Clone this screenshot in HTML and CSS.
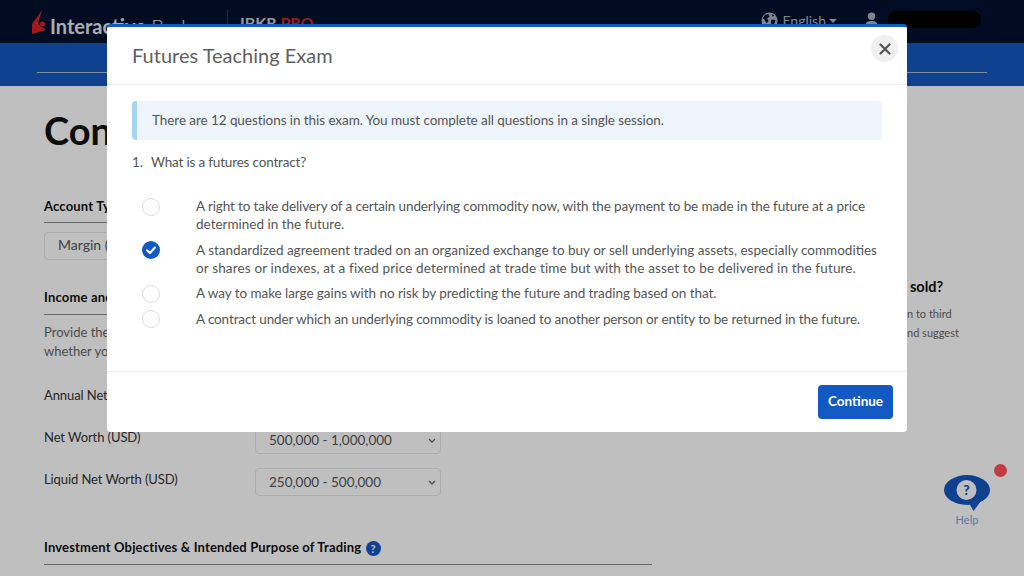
FILE: index.html
```html
<!DOCTYPE html>
<html lang="en">
<head>
<meta charset="utf-8">
<title>Futures Teaching Exam</title>
<link rel="stylesheet" href="styles.css">
</head>
<body>
<div class="page">
  <header class="topbar">
    <div class="brand">
      <svg class="logo" viewBox="0 0 14 25" width="14" height="25"><path d="M10.500 0 C8 5 3 10 0 15 V25 L14 21 L6 15 C7 10 9 5 10.500 0Z" fill="#d8232a"/><circle cx="10.500" cy="15" r="2.500" fill="#d8232a"/></svg>
      <span class="brand-name"><b>Interactive</b> Brokers</span>
    </div>
    <div class="product">IBKR <span class="pro">PRO</span></div>
    <div class="top-right">
      <svg class="globe" viewBox="0 0 18 18" width="17" height="17"><circle cx="9" cy="9" r="8.500" fill="#aab3bf"/><path d="M4 3 L8 2.500 L9 5 L6.500 7 L8 9.500 L6 12 L3.500 8 L2 7Z M11 8 L15.500 8.500 L14 13 L11.500 15 L10.500 11Z M11 2 L14 3.500 L12.500 5Z" fill="#01112d"/></svg>
      <span class="lang">English</span><span class="caret"></span>
      <svg class="user" viewBox="0 0 14 16" width="13" height="15"><circle cx="7" cy="4.500" r="4" fill="#aab3bf"/><path d="M1 15 V12.500 C1 10.500 4 9.500 7 9.500 C10 9.500 13 10.500 13 12.500 V15Z" fill="#aab3bf"/></svg>
      <span class="redacted"></span>
    </div>
  </header>
  <nav class="subnav"><div class="subnav-line"></div></nav>
  <main class="content">
    <div class="form-col">
      <h1 class="page-title">Con</h1>
      <h2 class="section-title first">Account Type</h2>
      <div class="field-box account-box">Margin (Reg T)</div>
      <h2 class="section-title income">Income and Net Worth</h2>
      <p class="intro">Provide the<br>whether you</p>
      <div class="row annual"><span class="row-label">Annual Net Income (USD)</span></div>
      <div class="row"><span class="row-label">Net Worth (USD)</span>
        <div class="field-box select-box">500,000 - 1,000,000<svg class="chev" viewBox="0 0 8 5" width="8" height="5"><path d="M1 1 L4 4 L7 1" fill="none" stroke="#666" stroke-width="1.300"/></svg></div>
      </div>
      <div class="row"><span class="row-label">Liquid Net Worth (USD)</span>
        <div class="field-box select-box">250,000 - 500,000<svg class="chev" viewBox="0 0 8 5" width="8" height="5"><path d="M1 1 L4 4 L7 1" fill="none" stroke="#666" stroke-width="1.300"/></svg></div>
      </div>
      <h2 class="section-title invest">Investment Objectives &amp; Intended Purpose of Trading <span class="qmark">?</span></h2>
    </div>
    <aside class="side-col">
      <h3 class="side-title">sold?</h3>
      <p class="side-a">n to third</p>
      <p class="side-b">nd suggest</p>
    </aside>
  </main>
  <div class="help">
    <span class="help-dot"></span>
    <svg class="help-bubble" viewBox="0 0 46 36" width="46" height="36"><ellipse cx="23" cy="15" rx="23" ry="15" fill="#1458be"/><path d="M25 28 L29.500 36 L37 26Z" fill="#1458be"/><circle cx="22.500" cy="15" r="10" fill="#fff"/></svg>
    <span class="help-q">?</span>
    <span class="help-label">Help</span>
  </div>
</div>
<div class="backdrop"></div>
<section class="modal">
  <div class="modal-head">
    <h2 class="modal-title">Futures Teaching Exam</h2>
    <button class="close" type="button"><svg viewBox="0 0 12 12" width="12" height="12"><path d="M1.500 1.500 L10.500 10.500 M10.500 1.500 L1.500 10.500" stroke="#555" stroke-width="2.200" stroke-linecap="round"/></svg></button>
  </div>
  <div class="modal-body">
    <div class="alert">There are 12 questions in this exam. You must complete all questions in a single session.</div>
    <div class="question"><span class="q-num">1.</span><span class="q-text">What is a futures contract?</span></div>
    <div class="options">
      <div class="option"><span class="radio-cell"><span class="radio"></span></span><span class="opt-text"><span class="line tight">A right to take delivery of a certain underlying commodity now, with the payment to be made in the future at a price</span><span class="line">determined in the future.</span></span></div>
      <div class="option"><span class="radio-cell raised"><svg class="radio-on" viewBox="0 0 18 18" width="18" height="18"><circle cx="9" cy="9" r="9" fill="#1259c3"/><path d="M5 9.300 L7.900 12 L13 6.500" fill="none" stroke="#fff" stroke-width="2" stroke-linecap="round" stroke-linejoin="round"/></svg></span><span class="opt-text"><span class="line">A standardized agreement traded on an organized exchange to buy or sell underlying assets, especially commodities</span><span class="line loose">or shares or indexes, at a fixed price determined at trade time but with the asset to be delivered in the future.</span></span></div>
      <div class="option"><span class="radio-cell"><span class="radio"></span></span><span class="opt-text"><span class="line slight">A way to make large gains with no risk by predicting the future and trading based on that.</span></span></div>
      <div class="option"><span class="radio-cell raised"><span class="radio"></span></span><span class="opt-text"><span class="line tight">A contract under which an underlying commodity is loaned to another person or entity to be returned in the future.</span></span></div>
    </div>
  </div>
  <div class="modal-foot"><button class="continue" type="button">Continue</button></div>
</section>
</body>
</html>
```
FILE: styles.css
```css
* { box-sizing: border-box; }
html, body { margin: 0; height: 576px; overflow: hidden; }
body { font-family: "Lato", "Liberation Sans", sans-serif; font-size: 14px; color: #555; background: #fff; }
.page { width: 1024px; height: 576px; overflow: hidden; position: relative; }
.topbar { height: 43px; background: #01112d; display: flex; align-items: flex-start; color: #fff; }
.brand { display: flex; align-items: flex-start; margin-left: 32px; padding-top: 9px; width: 195px; }
.logo { display: block; }
.brand-name { margin-left: 4px; font-size: 20px; line-height: 34px; white-space: nowrap; color: #e4e6ea; font-weight: 300; }
.brand-name b { font-weight: 700; }
.product { margin-top: 10px; border-left: 1px solid #2a3650; padding-left: 12px; height: 26px; font-size: 16px; line-height: 26px; font-weight: 700; color: #c4c9d2; white-space: nowrap; }
.pro { color: #d8232a; }
.top-right { margin-left: auto; display: flex; align-items: flex-start; padding-top: 11px; padding-right: 43px; color: #aab3bf; }
.globe { display: block; margin-top: 1px; }
.lang { margin-left: 4px; font-size: 14px; line-height: 20px; }
.caret { width: 0; height: 0; margin: 8px 0 0 3px; border: 4px solid transparent; border-top-color: #aab3bf; border-bottom: 0; }
.user { display: block; margin: 1px 0 0 28px; }
.redacted { width: 93px; height: 17px; margin-left: 10px; background: #000; border-radius: 9px; }
.subnav { height: 43px; background: #1458be; padding: 29px 37px 0; }
.subnav-line { height: 1px; background: #a9bfe0; }
.content { display: flex; background: #fff; height: 490px; padding-left: 44px; }
.form-col { width: 608px; flex: none; }
.page-title { margin: 21px 0 0; font-size: 38px; line-height: 46px; font-weight: 700; color: #111; }
.section-title { margin: 0; font-size: 13px; letter-spacing: .17px; line-height: 17px; font-weight: 700; color: #111; border-bottom: 1px solid #888; white-space: nowrap; }
.section-title.first { margin-top: 45px; padding-bottom: 7px; }
.section-title.income { margin-top: 29px; padding-bottom: 8px; }
.section-title.invest { margin-top: 43px; padding-bottom: 8px; }
.field-box { border: 1px solid #e6e6e6; border-radius: 4px; color: #555; font-size: 13.500px; white-space: nowrap; }
.account-box { margin-top: 9px; width: 180px; height: 28px; line-height: 24px; padding-left: 13px; font-size: 14px; }
.intro { margin: 8px 0 0; font-size: 13px; line-height: 19px; color: #666; white-space: nowrap; }
.row { display: flex; align-items: flex-start; height: 28px; margin-top: 14px; }
.row.annual { margin-top: 23px; }
.row-label { width: 211px; flex: none; padding-top: 3px; font-size: 13px; letter-spacing: -.09px; line-height: 16px; color: #333; white-space: nowrap; }
.select-box { position: relative; width: 186px; height: 28px; line-height: 27px; padding-left: 13px; }
.chev { position: absolute; right: 4px; top: 11px; }
.qmark { display: inline-block; width: 15px; height: 15px; margin-left: 1px; border-radius: 50%; background: #1458be; color: #fff; text-align: center; font-size: 11px; line-height: 15px; vertical-align: -1px; }
.side-col { margin-left: 256px; padding-top: 192px; white-space: nowrap; }
.side-title { margin: 0 0 0 2px; font-size: 14.500px; line-height: 18px; color: #111; font-weight: 700; }
.side-a { margin: 10px 0 0 -1px; font-size: 11px; line-height: 16px; color: #666; }
.side-b { margin: 3px 0 0 -1px; font-size: 11px; line-height: 16px; color: #666; }
.help { position: absolute; left: 944px; top: 475px; width: 46px; height: 55px; text-align: center; }
.help-bubble { display: block; }
.help-q { position: absolute; left: -1px; right: 0; top: 5px; line-height: 20px; font-size: 14px; font-weight: 900; color: #1458be; }
.help-label { display: block; font-size: 11px; line-height: 14px; margin-top: 2px; color: #7a9fdc; }
.help-dot { position: absolute; left: 50px; top: -11px; width: 13px; height: 13px; border-radius: 50%; background: #ff5159; }
.backdrop { position: absolute; left: 0; top: 0; width: 1024px; height: 576px; background: rgba(0, 0, 0, .25); }
.modal { position: absolute; left: 107px; top: 24px; width: 800px; height: 408px; background: #fff; border-top: 3px solid #1259c3; border-radius: 4px; display: flex; flex-direction: column; }
.modal-head { height: 58px; flex: none; display: flex; align-items: flex-start; justify-content: space-between; padding: 8px 9px 0 25px; border-bottom: 1px solid #eee; }
.modal-title { margin: 7px 0 0; font-size: 20px; line-height: 26px; font-weight: 400; color: #5f5f5f; }
.close { width: 27px; height: 27px; padding: 0; border: 0; border-radius: 50%; background: #f0f0f0; display: flex; align-items: center; justify-content: center; }
.modal-body { flex: 1; padding: 16px 25px 0; }
.alert { height: 39px; line-height: 39px; padding-left: 15px; background: #edf4fc; border-left: 5px solid #a5d5f3; border-radius: 4px; font-size: 13.500px; letter-spacing: -.07px; color: #555; }
.question { display: flex; margin-top: 13px; line-height: 18px; font-size: 13.500px; color: #555; }
.q-num { width: 19px; }
.q-text { letter-spacing: -.18px; }
.options { margin-top: 26px; }
.option { display: flex; align-items: flex-start; font-size: 13.500px; line-height: 18px; color: #555; margin-bottom: 7px; }
.option:first-child { margin-bottom: 8px; }
.radio-cell { width: 64px; flex: none; padding: 1px 0 0 10px; }
.radio-cell.raised { padding-top: 0; }
.radio { display: block; width: 18px; height: 18px; border: 1px solid #ddd; border-radius: 50%; background: #fff; }
.radio-on { display: block; }
.opt-text { flex: 1; }
.line { display: block; white-space: nowrap; }
.tight { letter-spacing: -.125px; }
.slight { letter-spacing: -.055px; }
.loose { letter-spacing: .15px; }
.modal-foot { height: 61px; flex: none; border-top: 1px solid #eee; padding: 13px 14px 0 0; display: flex; justify-content: flex-end; align-items: flex-start; }
.continue { width: 75px; height: 34px; padding: 0 0 2px; border: 0; border-radius: 4px; background: #1259c3; color: #fff; font-family: inherit; font-size: 13.500px; font-weight: 700; }
```
